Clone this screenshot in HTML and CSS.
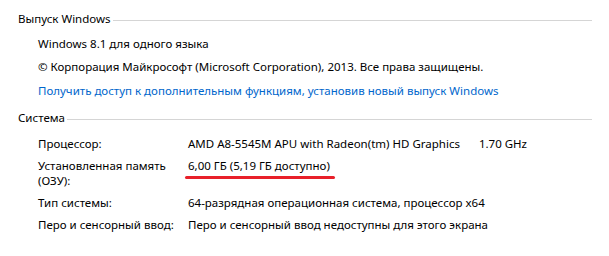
FILE: index.html
```html
<!DOCTYPE html>
<html lang="ru">
<head>
    <meta charset="UTF-8">
    <meta name="viewport" content="width=device-width, initial-scale=1.0">
    <title>Система</title>
    <link rel="stylesheet" href="styles.css">
</head>
<body>
    <div class="panel">
        <section class="group">
            <h2 class="group-title"><span>Выпуск Windows</span></h2>
            <div class="group-body">
                <p class="line">Windows 8.1 для одного языка</p>
                <p class="line">© Корпорация Майкрософт (Microsoft Corporation), 2013. Все права защищены.</p>
                <p class="line line-link"><a href="#" class="link">Получить доступ к дополнительным функциям, установив новый выпуск Windows</a></p>
            </div>
        </section>
        <section class="group">
            <h2 class="group-title"><span>Система</span></h2>
            <div class="props">
                <div class="prop-name">Процессор:</div>
                <div class="prop-value">AMD A8-5545M APU with Radeon(tm) HD Graphics <span class="freq">1.70 GHz</span></div>

                <div class="prop-name">Установленная память (ОЗУ):</div>
                <div class="prop-value"><span class="marked">6,00 ГБ (5,19 ГБ доступно)</span></div>

                <div class="prop-name">Тип системы:</div>
                <div class="prop-value">64-разрядная операционная система, процессор x64</div>

                <div class="prop-name">Перо и сенсорный ввод:</div>
                <div class="prop-value">Перо и сенсорный ввод недоступны для этого экрана</div>
            </div>
        </section>
    </div>
</body>
</html>
```

FILE: styles.css
```css
body {
    margin: 0;
    background: #ffffff;
    color: #000000;
    font-family: "Noto Sans", "Open Sans", sans-serif;
    font-size: 11.5px;
    line-height: 15px;
}
.panel {
    padding: 11px 17px 0 18px;
}
.group {
    margin-bottom: 12px;
}
.group-title {
    display: flex;
    align-items: center;
    margin: 0;
    font-size: 11.5px;
    font-weight: normal;
}
.group-title::after {
    content: "";
    flex: 1;
    border-top: 1px solid #d5d5d5;
    margin-top: 3px;
    margin-left: 2px;
}
.group-body {
    padding: 10px 0 0 20px;
}
.line {
    margin: 0 0 8px;
}
.line-link {
    margin-top: 9px;
}
.link {
    color: #0066cc;
    text-decoration: none;
}
.props {
    display: grid;
    grid-template-columns: 150px 1fr;
    row-gap: 7px;
    padding: 11px 0 0 20px;
}
.prop-name {
    padding-right: 8px;
}
.freq {
    margin-left: 16px;
}
.marked {
    position: relative;
}
.marked::after {
    content: "";
    position: absolute;
    left: -3px;
    top: 18px;
    width: 150px;
    height: 3px;
    border-radius: 2px;
    background: #e8202a;
}
```
